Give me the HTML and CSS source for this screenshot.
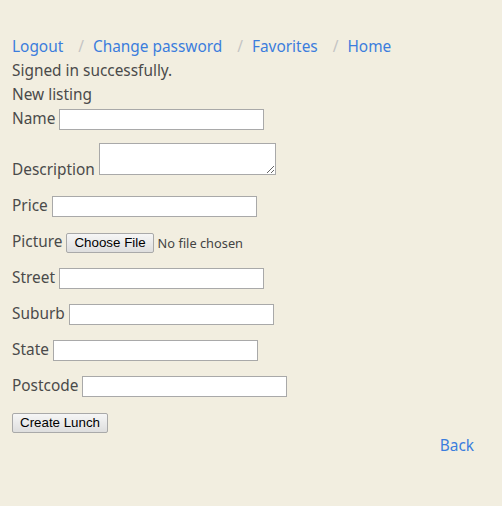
FILE: index.html
```html
<!DOCTYPE html>
<html>
<head>
<meta charset="utf-8">
<link rel="stylesheet" href="styles.css">
</head>
<body>
<div class="page">
  <ol class="breadcrumb">
    <li><a href="#">Logout</a></li>
    <li><a href="#">Change password</a></li>
    <li><a href="#">Favorites</a></li>
    <li><a href="#">Home</a></li>
  </ol>
  <p class="notice">Signed in successfully.</p>
  <h1 class="title">New listing</h1>
  <form class="form">
    <div class="field"><label>Name</label> <input type="text" class="text"></div>
    <div class="field"><label>Description</label> <textarea class="area"></textarea></div>
    <div class="field"><label>Price</label> <input type="text" class="text"></div>
    <div class="field"><label>Picture</label> <input type="file" class="file"></div>
    <div class="field"><label>Street</label> <input type="text" class="text"></div>
    <div class="field"><label>Suburb</label> <input type="text" class="text"></div>
    <div class="field"><label>State</label> <input type="text" class="text"></div>
    <div class="field"><label>Postcode</label> <input type="text" class="text"></div>
    <div class="actions"><button type="button" class="submit">Create Lunch</button></div>
  </form>
  <div class="back-row"><a href="#">Back</a></div>
</div>
</body>
</html>
```

FILE: styles.css
```css
html, body {
  margin: 0;
  padding: 0;
  background: #f2eee0;
}
body {
  font-family: "Noto Sans", "DejaVu Sans", sans-serif;
  font-size: 15.4px;
  line-height: 24px;
  color: #4a4a4a;
}
.page {
  padding: 35px 28px 20px 12px;
}
a {
  color: #3b7ddd;
  text-decoration: none;
}
.breadcrumb {
  list-style: none;
  margin: 0;
  padding: 0;
  display: flex;
}
.breadcrumb li + li::before {
  content: "/\00a0";
  padding: 0 5px 0 15px;
  color: #c4c4c4;
}
.notice, .title {
  margin: 0;
  font-size: 15.4px;
  font-weight: normal;
  line-height: 24px;
}
.form { margin: 0; }
.field {
  margin-bottom: 12px;
}
.text {
  box-sizing: border-box;
  width: 205px;
  height: 21px;
  border: 1px solid #a9a9a9;
  background: #fff;
  padding: 1px 2px;
  margin: 0;
  vertical-align: baseline;
}
.area {
  box-sizing: border-box;
  width: 177px;
  height: 32px;
  border: 1px solid #a9a9a9;
  background: #fff;
  margin: 0;
  vertical-align: baseline;
}
.file {
  font-family: "Noto Sans", sans-serif;
  font-size: 12.8px;
  color: #444;
}
.file::file-selector-button {
  font-family: "Liberation Sans", sans-serif;
  font-size: 13.33px;
  color: #000;
  background: linear-gradient(#f6f6f6, #dedede);
  border: 1px solid #a9a9a9;
  border-radius: 2px;
  padding: 1px 7px;
  height: 20px;
  margin-right: 4px;
}
.actions {
  line-height: 24px;
}
.submit {
  font-family: "Liberation Sans", sans-serif;
  font-size: 13.33px;
  color: #000;
  background: linear-gradient(#f6f6f6, #dedede);
  border: 1px solid #a9a9a9;
  border-radius: 2px;
  padding: 1px 7px;
  height: 20px;
}
.back-row {
  text-align: right;
}
```
